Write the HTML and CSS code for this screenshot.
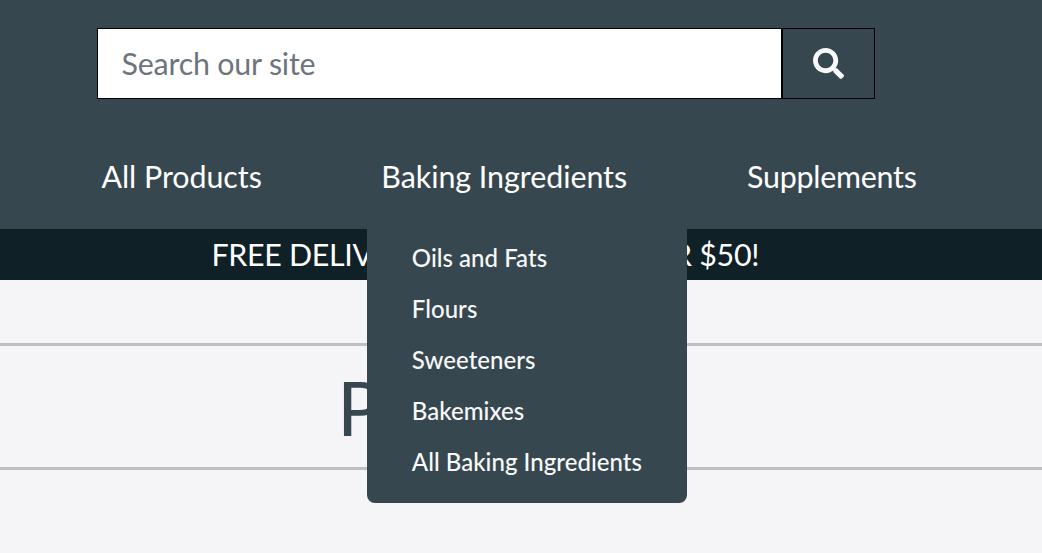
FILE: index.html
```html
<!DOCTYPE html>
<html lang="en">
<head>
<meta charset="utf-8">
<title>Products</title>
<link rel="stylesheet" href="styles.css">
</head>
<body>
<header class="header">
  <form class="search">
    <input class="search-input" type="text" placeholder="Search our site" aria-label="Search">
    <button class="search-button" type="button" aria-label="Search">
      <svg class="search-icon" viewBox="0 0 512 512"><path fill="currentColor" d="M505 442.700L405.300 343c-4.500-4.500-10.600-7-17-7H372c27.600-35.300 44-79.700 44-128C416 93.100 322.900 0 208 0S0 93.100 0 208s93.100 208 208 208c48.300 0 92.700-16.400 128-44v16.300c0 6.400 2.500 12.500 7 17l99.700 99.700c9.400 9.400 24.600 9.400 33.900 0l28.300-28.300c9.400-9.400 9.400-24.600.1-34zM208 336c-70.700 0-128-57.200-128-128 0-70.700 57.200-128 128-128 70.700 0 128 57.200 128 128 0 70.700-57.200 128-128 128z"/></svg>
    </button>
  </form>
  <nav class="nav">
    <a class="nav-link">All Products</a>
    <div class="nav-item">
      <a class="nav-link">Baking Ingredients</a>
      <div class="menu">
        <a class="menu-link">Oils and Fats</a>
        <a class="menu-link">Flours</a>
        <a class="menu-link">Sweeteners</a>
        <a class="menu-link">Bakemixes</a>
        <a class="menu-link">All Baking Ingredients</a>
      </div>
    </div>
    <a class="nav-link nav-link-last">Supplements</a>
  </nav>
</header>
<div class="banner">FREE DELIVERY ON ORDERS OVER $50!</div>
<main class="main">
  <h1 class="title">Products</h1>
</main>
</body>
</html>
```

FILE: styles.css
```css
* { box-sizing: border-box; }
body {
  margin: 0;
  height: 553px;
  overflow: hidden;
  background: #f5f5f7;
  font-family: Lato, sans-serif;
}
.header {
  height: 229px;
  padding-top: 28px;
  background: #37474f;
}
.search {
  display: flex;
  width: 778px;
  height: 71px;
  margin-left: 97px;
}
.search-input {
  width: 685px;
  padding: 0 24px 2px 23.500px;
  border: 1px solid #000;
  border-radius: 0;
  background: #fff;
  font: 30.4px Lato, sans-serif;
  letter-spacing: -0.2px;
}
.search-input::placeholder { color: #6c757d; opacity: 1; }
.search-button {
  display: flex;
  align-items: center;
  justify-content: center;
  width: 93px;
  padding: 0;
  border: 1px solid #000;
  background: #37474f;
  color: #f8f9fa;
}
.search-icon { width: 31px; height: 31px; }
.nav {
  display: flex;
  gap: 120px;
  padding: 57px 0 0 101.500px;
}
.nav-item { position: relative; margin-left: -0.500px; }
.nav-link {
  color: #fff;
  font-size: 30.4px;
  letter-spacing: -0.04px;
  line-height: 40px;
  white-space: nowrap;
}
.nav-link-last { letter-spacing: -0.24px; }
.menu {
  position: absolute;
  top: 72px;
  left: -14px;
  width: 320px;
  height: 275px;
  padding: 4px 45px 4px 44.500px;
  border-radius: 0 0 8px 8px;
  background: #37474f;
}
.menu-link {
  display: block;
  color: #f8f9fa;
  font-size: 24px;
  font-weight: 500;
  letter-spacing: 0.03px;
  line-height: 51px;
  white-space: nowrap;
}
.banner {
  height: 51px;
  padding-left: 211.500px;
  background: #0f2027;
  color: #fff;
  font-size: 30.4px;
  letter-spacing: -0.32px;
  line-height: 51px;
  white-space: nowrap;
}
.main {
  height: 127px;
  margin-top: 63px;
  border-top: 3px solid #bfbfc1;
  border-bottom: 3px solid #bfbfc1;
}
.title {
  margin: 0;
  padding-left: 337px;
  color: #37474f;
  font-size: 76px;
  font-weight: 400;
  line-height: 122px;
}
```
